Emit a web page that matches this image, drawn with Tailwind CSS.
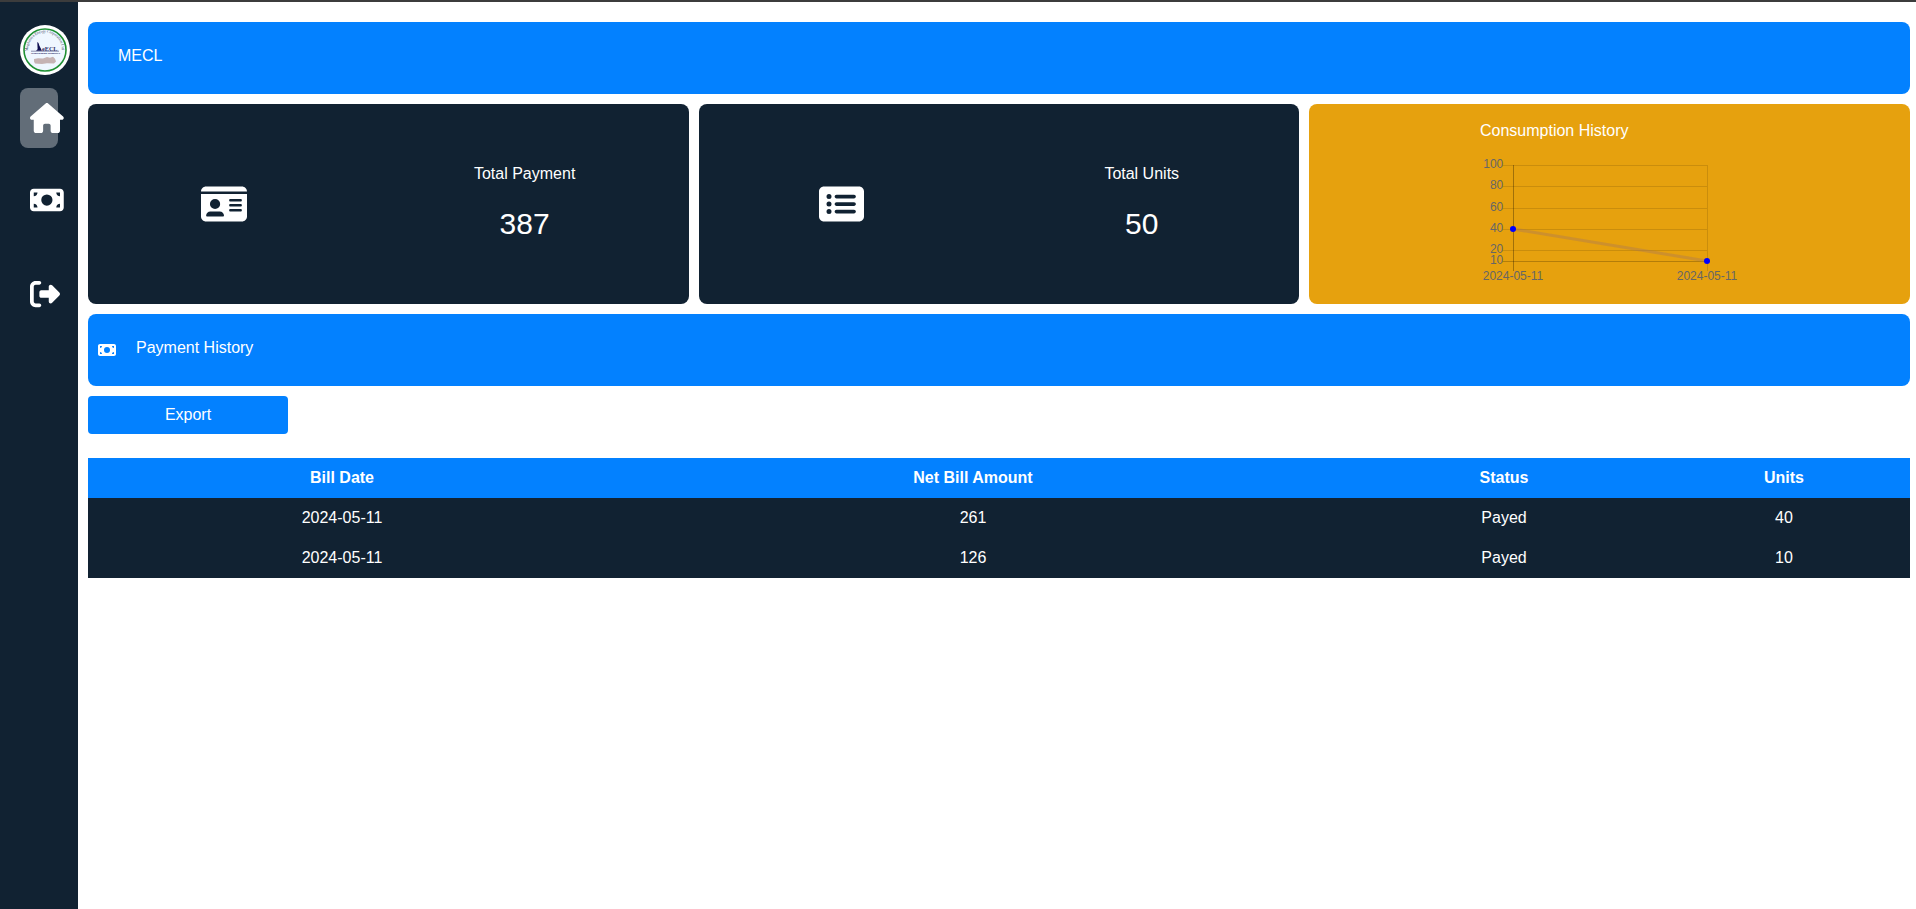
<!DOCTYPE html>
<html lang="en">
<head>
<meta charset="utf-8">
<title>MECL</title>
<script src="https://cdn.jsdelivr.net/npm/@tailwindcss/browser@4"></script>
</head>
<body class="h-screen overflow-hidden flex flex-col bg-white text-white text-base font-['Liberation_Sans',Arial,sans-serif]">
<div class="h-0.5 shrink-0 bg-[#3c3c3c]"></div>
<div class="flex flex-1">
  <aside class="w-[78px] shrink-0 bg-[#112232] pl-5 pt-[23px]">
    <svg class="block size-[50px]" viewBox="0 0 50 50">
      <defs><path id="arc" d="M8.300 27A16.900 16.900 0 1 1 41.700 27"/></defs>
      <circle cx="25" cy="25" r="25" fill="#fff"/>
      <circle cx="25" cy="25" r="21" fill="#eff7ff" stroke="#1f9033" stroke-width="1.600"/>
      <text font-size="3.800" fill="#333a55" font-family="Liberation Serif, serif"><textPath href="#arc" startOffset="1">Meghalaya Energy Corporation Ltd</textPath></text>
      <path d="M17.300 17l1.200 1 .8 2.500 2.600 5.200h-5.900l1.600-1.500z" fill="#101050"/>
      <text x="22" y="25.500" font-size="6" font-weight="bold" textLength="15.500" lengthAdjust="spacingAndGlyphs" fill="#33336a" font-family="Liberation Serif, serif">eECL</text>
      <path d="M11 26.200h28" stroke="#23235f" stroke-width=".5"/>
      <text x="11" y="29.200" font-size="2.600" font-weight="bold" textLength="29" lengthAdjust="spacingAndGlyphs" fill="#23235f" font-family="Liberation Serif, serif">Transforming Meghalaya</text>
      <path d="M14 34l4-.8 5 .3 4-1.500 3 .7 3-1 2 2 1 2.800-2 2-7-.3-5 .8-7-.6-1-2z" fill="#c5b3b3"/>
    </svg>
    <nav class="flex flex-col">
      <div class="mt-[13px] h-[60px] w-[38px] rounded-lg bg-[#626d78] pl-2.5 pt-[15px]">
        <svg class="block h-[30px] w-[33.75px] max-w-none" viewBox="0 0 576 512" fill="#fff" overflow="visible"><path d="M575.800 255.500c0 18-15 32.100-32 32.100h-32l.7 160.200c0 2.700-.2 5.400-.5 8.100V472c0 22.100-17.900 40-40 40H392c-22.100 0-40-17.900-40-40V384c0-17.700-14.300-32-32-32H256c-17.700 0-32 14.300-32 32v88c0 22.100-17.900 40-40 40H104c-22.100 0-40-17.900-40-40V287.600H32c-18 0-32-14-32-32.100c0-9 3-17 10-24L266.400 8c7-7 15-8 22-8s15 2 21 7L564.800 231.500c8 7 12 15 11 24z"/></svg>
      </div>
      <svg class="ml-2.5 mt-[36.500px] block h-[30px] w-[33.75px]" viewBox="0 0 576 512" fill="#fff"><path d="M64 64C28.700 64 0 92.700 0 128V384c0 35.300 28.700 64 64 64H512c35.300 0 64-28.700 64-64V128c0-35.300-28.700-64-64-64H64zm64 320H64V320c35.300 0 64 28.700 64 64zM64 192V128h64c0 35.300-28.700 64-64 64zM448 384c0-35.300 28.700-64 64-64v64H448zm64-192c-35.300 0-64-28.700-64-64h64v64zM288 160a96 96 0 1 1 0 192 96 96 0 1 1 0-192z"/></svg>
      <svg class="ml-2.5 mt-16 block size-[30px]" viewBox="0 0 512 512" fill="#fff"><path d="M377.900 105.900L500.700 228.700c7.200 7.200 11.300 17.100 11.300 27.300s-4.100 20.100-11.300 27.300L377.900 406.100c-6.400 6.400-15 9.900-24 9.900c-18.700 0-33.900-15.200-33.900-33.900l0-62.100-128 0c-17.700 0-32-14.300-32-32l0-64c0-17.700 14.300-32 32-32l128 0 0-62.100c0-18.700 15.200-33.900 33.900-33.900c9 0 17.600 3.600 24 9.900zM160 96L96 96c-17.700 0-32 14.300-32 32l0 256c0 17.700 14.300 32 32 32l64 0c17.700 0 32 14.300 32 32s-14.300 32-32 32l-64 0c-53 0-96-43-96-96L0 128C0 75 43 32 96 32l64 0c17.700 0 32 14.300 32 32s-14.300 32-32 32z"/></svg>
    </nav>
  </aside>
  <main class="flex-1 pl-2.5 pr-1.5 pt-5">
    <header class="h-[72px] rounded-lg bg-[#0381ff] pl-[30px] pt-[22px]">MECL</header>

    <section class="mt-2.5 grid h-[200px] grid-cols-3 gap-2.5">
      <div class="flex items-center justify-around rounded-lg bg-[#112232]">
        <svg class="h-10 w-[46px]" viewBox="0 0 576 512" preserveAspectRatio="none" fill="#fff"><path d="M0 96l576 0c0-35.300-28.700-64-64-64H64C28.700 32 0 60.700 0 96zm0 32V416c0 35.300 28.700 64 64 64H512c35.300 0 64-28.700 64-64V128H0zM64 405.300c0-29.500 23.900-53.300 53.300-53.300H234.700c29.500 0 53.300 23.900 53.300 53.300c0 5.900-4.800 10.700-10.700 10.700H74.700c-5.900 0-10.700-4.800-10.700-10.700zM176 192a64 64 0 1 1 0 128 64 64 0 1 1 0-128zm176 16c0-8.800 7.200-16 16-16H496c8.800 0 16 7.200 16 16s-7.200 16-16 16H368c-8.800 0-16-7.200-16-16zm0 64c0-8.800 7.200-16 16-16H496c8.800 0 16 7.200 16 16s-7.200 16-16 16H368c-8.800 0-16-7.200-16-16zm0 64c0-8.800 7.200-16 16-16H496c8.800 0 16 7.200 16 16s-7.200 16-16 16H368c-8.800 0-16-7.200-16-16z"/></svg>
        <div class="flex flex-col items-center gap-[15px] pb-px"><p>Total Payment</p><p class="text-[30px] leading-[45px]">387</p></div>
      </div>
      <div class="flex items-center justify-around rounded-lg bg-[#112232]">
        <svg class="h-10 w-[45px]" viewBox="0 0 576 512" fill="#fff"><path d="M0 96C0 60.700 28.700 32 64 32H512c35.300 0 64 28.700 64 64V416c0 35.300-28.700 64-64 64H64c-35.300 0-64-28.700-64-64V96zM128 288a32 32 0 1 0 0-64 32 32 0 1 0 0 64zm32-128a32 32 0 1 0 -64 0 32 32 0 1 0 64 0zM128 384a32 32 0 1 0 0-64 32 32 0 1 0 0 64zm96-248c-13.300 0-24 10.700-24 24s10.700 24 24 24H448c13.300 0 24-10.700 24-24s-10.700-24-24-24H224zm0 96c-13.300 0-24 10.700-24 24s10.700 24 24 24H448c13.300 0 24-10.700 24-24s-10.700-24-24-24H224zm0 96c-13.300 0-24 10.700-24 24s10.700 24 24 24H448c13.300 0 24-10.700 24-24s-10.700-24-24-24H224z"/></svg>
        <div class="flex flex-col items-center gap-[15px] pb-px"><p>Total Units</p><p class="text-[30px] leading-[45px]">50</p></div>
      </div>
      <div class="rounded-lg bg-[#e6a10e] pl-[170.670px] pt-[15px]">
        <p>Consumption History</p>
        <svg class="mt-[7px] block h-[150px] w-[260px]" viewBox="0 0 260 150">
          <g stroke="#000" stroke-opacity=".12" fill="none">
            <path d="M23 15.500H227M23 36.500H227M23 58.500H227M23 79.500H227M23 100.500H227M227.500 15V121"/>
            <path d="M33.500 15V121" stroke-opacity=".3"/>
            <path d="M23 111.500H227" stroke-opacity=".22"/>
          </g>
          <path d="M33 79L227 111" stroke="#a8785a" stroke-opacity=".4" stroke-width="3"/>
          <circle cx="33" cy="79" r="3" fill="#00f"/><circle cx="227" cy="111" r="3" fill="#00f"/>
          <g fill="#666" font-size="12" text-anchor="end">
            <text x="23.300" y="18">100</text><text x="23.300" y="39">80</text><text x="23.300" y="61">60</text><text x="23.300" y="82">40</text><text x="23.300" y="103">20</text><text x="23.300" y="114">10</text>
          </g>
          <g fill="#666" font-size="12" text-anchor="middle"><text x="33" y="130">2024-05-11</text><text x="227" y="130">2024-05-11</text></g>
        </svg>
      </div>
    </section>

    <div class="mt-2.5 flex h-[72px] rounded-lg bg-[#0381ff] pl-2.5 pt-[22px]">
      <svg class="mt-1.5 h-4 w-[18px]" viewBox="0 0 576 512" fill="#fff"><path d="M64 64C28.700 64 0 92.700 0 128V384c0 35.300 28.700 64 64 64H512c35.300 0 64-28.700 64-64V128c0-35.300-28.700-64-64-64H64zm64 320H64V320c35.300 0 64 28.700 64 64zM64 192V128h64c0 35.300-28.700 64-64 64zM448 384c0-35.300 28.700-64 64-64v64H448zm64-192c-35.300 0-64-28.700-64-64h64v64zM288 160a96 96 0 1 1 0 192 96 96 0 1 1 0-192z"/></svg>
      <p class="ml-5">Payment History</p>
    </div>
    <button class="mt-2.5 block h-[38px] w-[200px] rounded bg-[#0381ff]">Export</button>

    <table class="mt-6 w-full table-fixed border-collapse bg-[#112232] text-center">
      <colgroup><col class="w-[508px]"><col class="w-[754px]"><col class="w-[308px]"><col class="w-[252px]"></colgroup>
      <thead><tr class="h-10 bg-[#0381ff]"><th>Bill Date</th><th>Net Bill Amount</th><th>Status</th><th>Units</th></tr></thead>
      <tbody>
        <tr class="h-10"><td>2024-05-11</td><td>261</td><td>Payed</td><td>40</td></tr>
        <tr class="h-10"><td>2024-05-11</td><td>126</td><td>Payed</td><td>10</td></tr>
      </tbody>
    </table>
  </main>
</div>
</body>
</html>
